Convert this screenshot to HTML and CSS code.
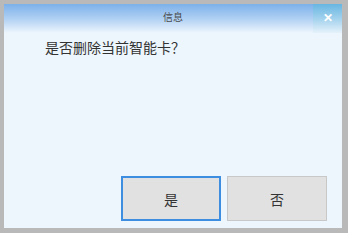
FILE: index.html
```html
<!DOCTYPE html>
<html lang="zh-CN">
<head>
    <meta charset="UTF-8">
    <title>信息</title>
    <link rel="stylesheet" href="styles.css">
</head>
<body>
    <div class="dialog">
        <div class="titlebar">
            <span class="title">信息</span>
            <span class="close">&#x2715;</span>
        </div>
        <div class="content">
            <p class="message">是否删除当前智能卡？</p>
            <div class="buttons">
                <button class="btn primary">是</button>
                <button class="btn">否</button>
            </div>
        </div>
    </div>
</body>
</html>
```
FILE: styles.css
```css
body {
    margin: 0;
    font-family: "Noto Sans CJK SC", "Liberation Sans", sans-serif;
}
.dialog {
    width: 348px;
    height: 233px;
    box-sizing: border-box;
    border-style: solid;
    border-color: #b9b9b9;
    border-width: 4px 6px 5px 4px;
    background: #eef6fd;
    display: flex;
    flex-direction: column;
}
.titlebar {
    height: 29px;
    display: flex;
    background: linear-gradient(#7cb0ea, #b4d3f4 55%, #eef6fd);
}
.title {
    flex: 1;
    text-align: center;
    font-size: 10px;
    line-height: 26px;
    color: #4a4a4a;
    padding-left: 29px;
}
.close {
    width: 29px;
    text-align: center;
    font-size: 12px;
    font-weight: bold;
    line-height: 26px;
    color: #fff;
    background: linear-gradient(#68b6e2, #a8d4ee 55%, #e6f2fb);
}
.content {
    flex: 1;
    display: flex;
    flex-direction: column;
}
.message {
    margin: 4px 0 0 41px;
    font-size: 14px;
    line-height: 20px;
    color: #333;
}
.buttons {
    margin-top: auto;
    display: flex;
    justify-content: flex-end;
    gap: 6px;
    padding: 0 15px 7px 0;
}
.btn {
    width: 100px;
    height: 45px;
    box-sizing: border-box;
    border: 1px solid #c8c8c8;
    background: #e1e1e1;
    font-family: "Noto Sans CJK SC", sans-serif;
    font-size: 14px;
    color: #333;
}
.btn.primary {
    border: 2px solid #3d8ee0;
}
```
